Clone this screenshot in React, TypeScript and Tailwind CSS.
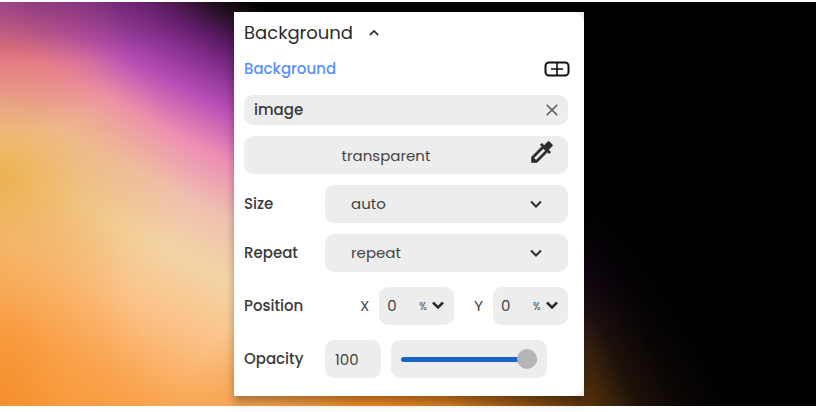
import { useState } from "react";

const backdrop =
  "bg-[radial-gradient(ellipse_170px_60px_at_40px_0,rgba(120,50,112,0.65),transparent),radial-gradient(ellipse_130px_90px_at_0_45px,rgba(220,100,104,0.7),transparent),radial-gradient(ellipse_190px_150px_at_0_175px,rgba(236,172,70,0.85),rgba(236,178,90,0.45)_45%,transparent),radial-gradient(ellipse_150px_260px_at_0_100%,rgba(245,143,46,0.85),rgba(250,155,62,0.4)_45%,transparent),linear-gradient(63deg,transparent_340px,rgba(0,0,0,0.1)_400px,rgba(0,0,0,0.62)_520px,rgba(0,0,0,0.88)_570px,rgba(0,0,0,0.96)_610px,#000_660px),radial-gradient(ellipse_300px_140px_at_480px_100%,#f08a22,#f08a22_40%,transparent),linear-gradient(207deg,#000_255px,#24101f_275px,#5f1c6a_305px,#8e3596_335px,#b54db4_362px,#ee8cb4_408px,#efc0b0_460px,#f3d4a5_515px,#fbc084_585px,#f9a550_655px,#f59230_740px)]";

const field = "rounded-[9px] bg-[#ededed] text-[#444]";

function Chevron({ className, stroke = 2 }: { className: string; stroke?: number }) {
  return (
    <svg viewBox="0 0 12 8" fill="none" stroke="#2b2b2b" strokeWidth={stroke} className={className} aria-hidden="true">
      <path d="M1 1.5 6 6.5 11 1.5" />
    </svg>
  );
}

function SelectRow({ id, label, options }: { id: string; label: string; options: string[] }) {
  return (
    <div className="flex items-center">
      <label htmlFor={id} className="w-[81px] font-medium">{label}</label>
      <div className="relative flex-1">
        <select id={id} className={`block h-[38px] w-full appearance-none px-[26px] outline-none ${field}`}>
          {options.map((o) => (
            <option key={o}>{o}</option>
          ))}
        </select>
        <Chevron className="pointer-events-none absolute top-[15px] right-[26px] h-2 w-3" />
      </div>
    </div>
  );
}

function AxisField({ axis }: { axis: string }) {
  const id = `position-${axis}`;
  return (
    <div className="flex items-center gap-2.5">
      <label htmlFor={id} className="text-[#444]">{axis}</label>
      <div className={`flex h-[38px] w-[75px] items-center pl-2 ${field}`}>
        <input id={id} type="text" defaultValue="0" className="w-8 bg-transparent outline-none" />
        <div className="relative flex-1">
          <select aria-label={`${axis} unit`} className="w-full appearance-none bg-transparent text-[10px] outline-none">
            <option>%</option>
            <option>px</option>
          </select>
          <Chevron stroke={2.5} className="pointer-events-none absolute top-2 right-2.5 h-2 w-3" />
        </div>
      </div>
    </div>
  );
}

export default function App() {
  const [opacity, setOpacity] = useState("100");
  return (
    <main className="bg-white pt-0.5 pb-1.5 font-['Poppins','Inter',sans-serif] text-[15px] leading-6 text-[#3a3a3a]">
      <div className={`py-2.5 pl-0.5 ${backdrop}`}>
        <div className="mx-auto w-[350px] bg-[#ededed] shadow-[0_6px_8px_rgba(0,0,0,0.3)]">
          <section className="rounded-r-xl bg-white pr-4 pb-[18px] pl-2.5">
            <button type="button" aria-expanded="true" className="flex h-[42px] items-center gap-4 text-lg text-[#2b2b2b]">
              Background
              <Chevron className="h-2 w-2.5 rotate-180" />
            </button>
            <div className="flex h-[30px] items-center justify-between">
              <h2 className="font-medium text-[#5a8ffb]">Background</h2>
              <button type="button" aria-label="Add background" className="-mr-0.5">
                <svg viewBox="0 0 26 16" className="h-4 w-[26px]" fill="none" stroke="#111" strokeWidth="2" aria-hidden="true">
                  <rect x="1.5" y="1.5" width="23" height="13" rx="3.5" />
                  <path d="M13 2v12M7 8h12" strokeWidth="1.6" />
                </svg>
              </button>
            </div>
            <div className="mt-[11px] flex flex-col gap-[11px]">
              <div className="flex h-[30px] items-center justify-between rounded-[9px] bg-[#ededed] px-2.5 font-medium">
                image
                <button type="button" aria-label="Remove image">
                  <svg viewBox="0 0 12 12" className="h-3 w-3" stroke="#555" strokeWidth="1.5" aria-hidden="true">
                    <path d="M.7.7 11.3 11.3M11.3.7.7 11.3" />
                  </svg>
                </button>
              </div>
              <div className={`relative h-[38px] ${field}`}>
                <input
                  type="text"
                  aria-label="Background colour"
                  defaultValue="transparent"
                  className="h-full w-full bg-transparent pr-10 pl-0 text-center outline-none"
                />
                <button type="button" aria-label="Pick colour" className="absolute top-0.5 right-3">
                  <svg viewBox="0 0 24 24" className="h-7 w-7" fill="#2b2b2b" stroke="#2b2b2b" strokeWidth="0.5" aria-hidden="true">
                    <path d="m20.71 5.63-2.34-2.34a1 1 0 0 0-1.41 0l-3.12 3.12-1.93-1.91-1.41 1.41 1.42 1.42L3 16.25V21h4.75l8.92-8.92 1.42 1.42 1.41-1.41-1.92-1.92 3.12-3.12c.4-.4.4-1.03.01-1.42M6.92 19 5 17.08l8.06-8.06 1.92 1.92z" />
                  </svg>
                </button>
              </div>
              <SelectRow id="size" label="Size" options={["auto", "cover", "contain"]} />
              <SelectRow id="repeat" label="Repeat" options={["repeat", "no-repeat", "repeat-x", "repeat-y"]} />
              <div role="group" aria-labelledby="position" className="mt-1 flex items-center justify-between">
                <span id="position" className="font-medium">Position</span>
                <div className="flex gap-5">
                  <AxisField axis="X" />
                  <AxisField axis="Y" />
                </div>
              </div>
              <div className="mt-1 flex items-center">
                <label htmlFor="opacity" className="w-[81px] font-medium">Opacity</label>
                <input
                  id="opacity"
                  type="text"
                  value={opacity}
                  onChange={(e) => setOpacity(e.target.value)}
                  className={`h-[38px] w-14 px-2.5 outline-none ${field}`}
                />
                <div className={`ml-2.5 flex h-[38px] w-[156px] items-center px-2.5 ${field}`}>
                  <input
                    type="range"
                    aria-label="Opacity slider"
                    min="0"
                    max="100"
                    value={Number(opacity) || 0}
                    onChange={(e) => setOpacity(e.target.value)}
                    className="h-[5px] w-full appearance-none rounded-full bg-[#1767c5] outline-none [&::-webkit-slider-thumb]:h-5 [&::-webkit-slider-thumb]:w-5 [&::-webkit-slider-thumb]:appearance-none [&::-webkit-slider-thumb]:rounded-full [&::-webkit-slider-thumb]:bg-[#b5b5b5]"
                  />
                </div>
              </div>
            </div>
          </section>
        </div>
      </div>
    </main>
  );
}
